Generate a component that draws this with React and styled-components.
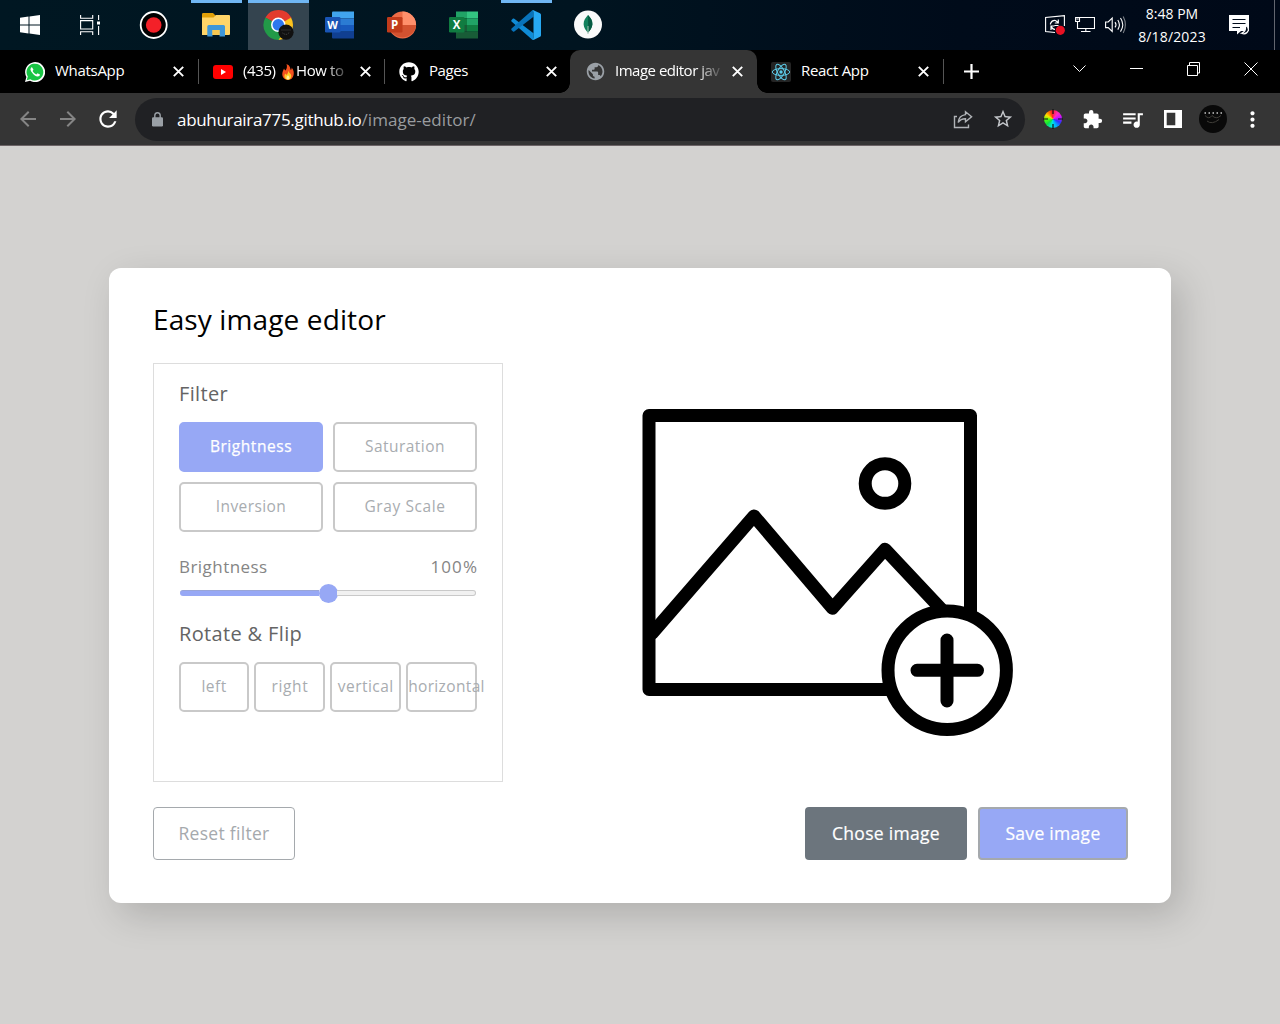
import React from "react";
import styled, { createGlobalStyle } from "styled-components";
import { FaGithub } from "react-icons/fa";
import {
  MdArrowBack,
  MdArrowForward,
  MdRefresh,
  MdStarBorder,
  MdExtension,
  MdQueueMusic,
  MdMoreVert,
  MdPublic,
} from "react-icons/md";

const Global = createGlobalStyle`
  * { box-sizing: border-box; }
  body { margin: 0; background: #d3d2d0; font-family: "Open Sans", "Noto Sans", sans-serif; overflow: hidden; }
  svg { display: block; flex: none; }
  button { font-family: inherit; margin: 0; padding: 0; }
`;

const Screen = styled.div`
  width: 1280px;
  height: 1024px;
  display: flex;
  flex-direction: column;
`;

/* ---------- taskbar ---------- */
const Taskbar = styled.header`
  height: 50px;
  display: flex;
  background: linear-gradient(90deg, #001722 0%, #001420 45%, #000b1a 75%, #000918 100%);
  color: #fff;
`;
const Slot = styled.div`
  width: ${(p) => p.$w || 62}px;
  height: 50px;
  display: flex;
  align-items: center;
  justify-content: center;
`;
const AppSlot = styled(Slot)`
  padding: 0 ${(p) => (p.$active ? "0 0 1px" : 0)};
  background: ${(p) => (p.$active ? "#34444f" : "transparent")};
  background-clip: content-box;
  background-image: ${(p) => (p.$open ? "linear-gradient(#70b6f3, #70b6f3)" : "none")};
  background-size: ${(p) => (p.$active ? 61 : 51)}px 3px;
  background-position: ${(p) => (p.$active ? 1 : 6)}px 0;
  background-repeat: no-repeat;
`;
const Tray = styled.div`
  margin-left: auto;
  display: flex;
  align-items: center;
  height: 50px;
`;
const TrayIcons = styled.div`
  display: flex;
  gap: 10px;
  margin-right: 11px;
`;
const Clock = styled.div`
  width: 70px;
  display: flex;
  flex-direction: column;
  text-align: center;
  font-size: 14px;
  line-height: 23px;
  white-space: nowrap;
`;
const ClockLine = styled.span`
  letter-spacing: ${(p) => p.$ls}px;
`;
const Notice = styled.div`
  margin: 0 24px 0 22px;
`;
const DesktopEdge = styled.div`
  width: 6px;
  height: 50px;
  border-left: 1px solid #62666f;
`;

/* ---------- tab strip ---------- */
const TabStrip = styled.nav`
  height: 43px;
  display: flex;
  align-items: stretch;
  background: #000;
  padding-left: 12px;
  color: #fff;
`;
const Tab = styled.div`
  position: relative;
  width: ${(p) => p.$w || 186}px;
  display: flex;
  align-items: center;
  padding-left: ${(p) => p.$pl ?? 15}px;
  background: ${(p) => (p.$active ? "#353535" : "transparent")};
  border-radius: 10px 10px 0 0;
  &::before,
  &::after {
    content: "";
    display: ${(p) => (p.$active ? "block" : "none")};
    position: absolute;
    bottom: 0;
    width: 10px;
    height: 10px;
  }
  &::before {
    left: -10px;
    background: radial-gradient(circle at 0 0, transparent 9.5px, #353535 10px);
  }
  &::after {
    right: -10px;
    background: radial-gradient(circle at 100% 0, transparent 9.5px, #353535 10px);
  }
`;
const TabTitle = styled.span`
  display: flex;
  align-items: center;
  width: 107px;
  margin-left: ${(p) => p.$ml ?? 9}px;
  padding-bottom: 3px;
  overflow: hidden;
  white-space: nowrap;
  font-size: 15px;
  line-height: 22px;
  letter-spacing: ${(p) => p.$ls || 0}px;
  ${(p) => p.$fade && "mask-image: linear-gradient(90deg, #000 76%, transparent 102%);"}
`;
const FlameGap = styled.span`
  padding: 3px 2px 0 3px;
`;
const CloseX = styled.svg`
  margin-left: ${(p) => p.$ml ?? 10}px;
`;
const Divider = styled.i`
  width: 1px;
  height: 25px;
  margin-left: auto;
  background: #555;
`;
const NewTab = styled.div`
  display: flex;
  align-items: center;
  margin-left: 20px;
`;
const WindowControls = styled.div`
  margin-left: auto;
  display: flex;
  align-items: center;
  gap: 43px;
  padding: 0 22px 5px 0;
`;

/* ---------- toolbar ---------- */
const Toolbar = styled.div`
  height: 53px;
  display: flex;
  align-items: center;
  background: #353535;
  border-bottom: 1px solid #6c6466;
  color: #fff;
`;
const NavIcons = styled.div`
  width: 135px;
  display: flex;
  padding-left: 7.5px;
`;
const IconCell = styled.span`
  width: 40px;
  height: 40px;
  display: flex;
  align-items: center;
  justify-content: center;
  color: ${(p) => p.$c || "#fff"};
`;
const Omnibox = styled.div`
  width: 890px;
  height: 43px;
  border-radius: 22px;
  background: #202124;
  display: flex;
  align-items: center;
  padding-left: 17px;
  padding-right: 2px;
`;
const Url = styled.span`
  margin-left: 14px;
  font-size: 17px;
  letter-spacing: -0.31px;
  color: #fff;
  white-space: nowrap;
  flex: 1;
`;
const UrlPath = styled.span`
  color: #999c9f;
  letter-spacing: 0.04px;
`;
const Extensions = styled.div`
  display: flex;
  padding-left: 7.5px;
`;
const Wheel = styled.i`
  width: 18px;
  height: 18px;
  border-radius: 50%;
  background: conic-gradient(from -10deg, #ff2020, #ff2bc0 50deg, #d010ff 85deg, #3030ff 125deg, #00b0ff 165deg, #00e8e0 200deg, #10e040 240deg, #50ff10 275deg, #ffe000 310deg, #ff8000 335deg, #ff2020);
  display: flex;
  align-items: center;
  justify-content: center;
`;

/* ---------- page ---------- */
const Page = styled.main`
  flex: 1;
  display: flex;
  justify-content: center;
  align-items: flex-start;
  padding-top: 122px;
  background: #d3d2d0;
`;
const Card = styled.section`
  width: 1062px;
  height: 635px;
  padding: 32px 43px 43px 44px;
  border-radius: 12px;
  background: #fff;
  box-shadow: 10px 12px 36px rgba(0, 0, 0, 0.17);
  display: flex;
  flex-direction: column;
`;
const Title = styled.h1`
  margin: 0;
  height: 63px;
  font-size: 28px;
  font-weight: 400;
  line-height: 38px;
  letter-spacing: 0.12px;
  color: #000;
`;
const Workspace = styled.div`
  display: flex;
  height: 419px;
`;
const Panel = styled.div`
  width: 350px;
  border: 1px solid #dddddd;
  padding: 15px 25px;
`;
const Heading = styled.h2`
  margin: 0 0 13px;
  font-size: 20px;
  font-weight: 400;
  line-height: 30px;
  letter-spacing: 0.35px;
  color: #646464;
`;
const FilterGrid = styled.div`
  display: grid;
  grid-template-columns: 1fr 1fr;
  gap: 10px;
`;
const FlipGrid = styled.div`
  display: grid;
  grid-template-columns: repeat(4, minmax(0, 1fr));
  gap: 5px;
  margin-left: -0.4px;
`;
const Option = styled.button`
  height: 50px;
  padding-bottom: 2px;
  border: 2px solid ${(p) => (p.$active ? "#97a8f5" : "#c9c9c9")};
  border-radius: 5px;
  background: ${(p) => (p.$active ? "#97a8f5" : "#fff")};
  color: ${(p) => (p.$active ? "#fff" : "#a8acb0")};
  font-size: 15.5px;
  letter-spacing: ${(p) => p.$ls ?? 0.45}px;
  -webkit-text-stroke: ${(p) => (p.$active ? "0.25px #fff" : "0")};
  white-space: nowrap;
`;
const SliderInfo = styled.div`
  display: flex;
  justify-content: space-between;
  margin-top: 23px;
  font-size: 17px;
  line-height: 24px;
  color: #858585;
`;
const Label = styled.span`
  letter-spacing: ${(p) => p.$ls || 0}px;
  margin-right: ${(p) => -(p.$ls || 0)}px;
`;
const Slider = styled.div`
  height: 20px;
  margin: 4px 1px 16px;
  display: flex;
  align-items: center;
`;
const Filled = styled.i`
  width: 139px;
  height: 6px;
  border-radius: 3px 0 0 3px;
  background: #97a8f5;
  border-top: 1px solid #99a5d8;
`;
const Thumb = styled.i`
  width: 19px;
  height: 19px;
  margin-left: -0.5px;
  border-radius: 50%;
  background: #97a8f5;
`;
const Rest = styled.i`
  flex: 1;
  height: 6px;
  margin-left: -1px;
  border: 1px solid #c9c9c9;
  border-left: 0;
  border-radius: 0 3px 3px 0;
  background: #f1f1f1;
`;
const Preview = styled.div`
  flex: 1;
  display: flex;
  align-items: flex-start;
  padding: 43px 0 0 137px;
`;
const Footer = styled.div`
  display: flex;
  margin-top: 25px;
`;
const Action = styled.button`
  width: ${(p) => p.$w}px;
  height: 53px;
  padding-bottom: 2px;
  margin-left: ${(p) => p.$ml || 0};
  border: ${(p) => p.$border};
  border-radius: 4px;
  background: ${(p) => p.$bg};
  color: ${(p) => p.$c};
  font-size: 17.5px;
  letter-spacing: 0.3px;
  -webkit-text-stroke: ${(p) => (p.$strong ? "0.2px #fff" : "0")};
  white-space: nowrap;
`;

/* ---------- drawings ---------- */
const WindowsLogo = () => (
  <svg width="20" height="20" viewBox="0 0 20 20" fill="#fff">
    <path d="M0 2.8 8.5 1.6V9.4H0ZM9.5 1.4 20 0V9.4H9.5ZM0 10.5H8.5V18.4L0 17.2ZM9.5 10.5H20V20L9.5 18.6Z" />
  </svg>
);
const TaskView = () => (
  <svg width="21" height="20" viewBox="0 0 21 20" fill="none" stroke="#fff" strokeWidth="1.1">
    <path d="M.6 0V3.2H12.7V0M.6 20V16.8H12.7V20M.6 5.6H12.7V14H.6ZM18.6 0V5M18.6 11V20" />
    <path d="M17 6.5h3v3h-3Z" fill="#fff" stroke="none" />
  </svg>
);
const Recorder = () => (
  <svg width="30" height="30" viewBox="0 0 30 30">
    <circle cx="15.7" cy="15" r="13" fill="#000" stroke="#fff" strokeWidth="1.8" />
    <circle cx="15.7" cy="15" r="7.8" fill="#f32028" />
  </svg>
);
const Folder = () => (
  <svg width="28" height="24" viewBox="0 0 28 24">
    <path d="M0 1.2Q0 0 1.2 0H11L13.5 2.5V6H0Z" fill="#e0a008" />
    <path d="M0 4.5H11.5L14 2H27Q28 2 28 3V21Q28 22 27 22H0Z" fill="#ffd568" />
    <path d="M5.3 23.5V13.5Q5.3 12 6.8 12H21.5Q23 12 23 13.5V23.5H17.5V17H10.5V23.5Z" fill="#3e97d9" />
    <path d="M10.5 17H17.5V22H10.5Z" fill="#f8c850" />
  </svg>
);
const Chrome = () => (
  <svg width="32" height="32" viewBox="0 0 32 32">
    <path d="M15.5 16 2.4 8.6A15 15 0 0 1 28.6 9Z" fill="#e33b2e" />
    <path d="M15.5 16 28 8.5A15 15 0 0 1 15.5 31L14 25Z" fill="#fcc31e" />
    <path d="M15.5 16 2.5 8.5A15 15 0 0 0 15.5 31L20 24Z" fill="#229a48" />
    <path d="M8.4 9.2H28.8L24 9.6H15Z" fill="#e33b2e" />
    <circle cx="15.3" cy="15.8" r="7.3" fill="#fff" />
    <circle cx="15.3" cy="15.8" r="5.8" fill="#2e77ee" />
    <circle cx="23" cy="23.2" r="7.6" fill="#111" />
    <path d="M18.5 21h9M19.5 24c3 2 5 2 7-1" stroke="#5a5a5a" strokeWidth=".8" fill="none" strokeDasharray="1 1" />
  </svg>
);
const letterProps = { fill: "#fff", fontFamily: "Open Sans, sans-serif", fontWeight: 700, textAnchor: "middle" };
const Word = () => (
  <svg width="30" height="28" viewBox="0 0 30 28">
    <path d="M7 1.5Q7 .5 8 .5H29V7.3H7Z" fill="#41a5ee" />
    <path d="M7 7.3H29V14H7Z" fill="#2b7cd3" />
    <path d="M7 14H29V20.7H7Z" fill="#185abd" />
    <path d="M7 20.7H29V27.5H8Q7 27.5 7 26.5Z" fill="#103f91" />
    <rect x="0" y="6" width="15.5" height="15.5" rx="1.3" fill="#1955b5" />
    <text x="7.6" y="17.7" fontSize="11" {...letterProps}>W</text>
  </svg>
);
const PowerPoint = () => (
  <svg width="30" height="28" viewBox="0 0 30 28">
    <circle cx="15.5" cy="14" r="13.6" fill="#ed6c47" />
    <path d="M15.5.4A13.6 13.6 0 0 1 29.1 14H15.5Z" fill="#ff8f6b" />
    <path d="M2 14H29.1A13.6 13.6 0 0 1 2 14Z" fill="#d35230" />
    <rect x="0" y="6" width="15.5" height="15.5" rx="1.3" fill="#c13b1b" />
    <text x="7.6" y="17.9" fontSize="11.5" {...letterProps}>P</text>
  </svg>
);
const Excel = () => (
  <svg width="30" height="28" viewBox="0 0 30 28">
    <path d="M7 .5H18V7.3H7Z" fill="#21a366" />
    <path d="M18 .5H29V7.3H18Z" fill="#33c481" />
    <path d="M7 7.3H18V14H7Z" fill="#107c41" />
    <path d="M18 7.3H29V14H18Z" fill="#21a366" />
    <path d="M7 14H18V20.7H7Z" fill="#185c37" />
    <path d="M18 14H29V20.7H18Z" fill="#107c41" />
    <path d="M7 20.7H29V27.5H7Z" fill="#185c37" />
    <rect x="0" y="6" width="15.5" height="15.5" rx="1.3" fill="#107c41" />
    <text x="7.6" y="17.9" fontSize="11.5" {...letterProps}>X</text>
  </svg>
);
const VSCode = () => (
  <svg width="30" height="30" viewBox="0 0 30 30">
    <path d="M.4 10.2 2 8.6Q2.7 8.2 3.3 8.7L22.5 23.2V29.7L21 29.5.5 11.5Q0 10.8.4 10.2Z" fill="#0f8bd6" />
    <path d="M.4 20 2 21.5Q2.7 21.9 3.3 21.4L22.5 6.8V.3L21 .6.5 18.6Q0 19.3.4 20Z" fill="#0873ba" />
    <path d="M21 .6Q22 0 23 .4L29 3.2Q30 3.8 30 4.8V25.2Q30 26.3 29 26.8L23 29.7Q22 30 21 29.4 22.5 29.3 22.5 27.8V2.2Q22.5.8 21 .6Z" fill="#27a9f3" />
  </svg>
);
const Mongo = () => (
  <svg width="30" height="30" viewBox="0 0 30 30">
    <circle cx="15" cy="14.6" r="14" fill="#fafafa" />
    <path d="M15 5C17.8 8 19.5 10.3 19.4 14.2C19.2 18 17 20.3 15.3 22.5H14.7C13 20.3 10.7 18 10.6 14.2C10.6 10.3 12.4 8 15 5Z" fill="#12805c" />
    <path d="M15 5C17.8 8 19.5 10.3 19.4 14.2C19.2 18 17 20.3 15.3 22.5Z" fill="#075b43" />
    <path d="M15 16V24" stroke="#a9c3b5" strokeWidth="1" />
  </svg>
);
const SyncTray = () => (
  <svg width="20" height="20" viewBox="0 0 20 20" fill="none" stroke="#fff" strokeWidth="1.1">
    <path d="M10 17.5 .6 16.5V2.5L19.4.6V11" />
    <path d="M5.5 9.5V8.5Q7 5 10.5 5.5L13 7.5M13.3 4.5V8H9.8M13.5 10.5H9.5M6 15V11H9.5M6.3 11.5Q7.5 14.5 10 14.3" strokeWidth="1.2" />
    <circle cx="15.3" cy="15.3" r="4.6" fill="#e81123" stroke="none" />
  </svg>
);
const NetworkTray = () => (
  <svg width="20" height="20" viewBox="0 0 20 20" fill="none" stroke="#fff" strokeWidth="1.1">
    <path d="M5 2.5H19.5V13.5H2.5V7M10.8 13.5V16.5M6 16.5H15.5M.6 2.5H4.5V6.5H.6ZM1.5 4H3.6" />
  </svg>
);
const SoundTray = () => (
  <svg width="21" height="20" viewBox="0 0 21 20" fill="none" stroke="#fff" strokeWidth="1.1">
    <path d="M.6 7H3.2L7.2 3V16.5L3.2 12.6H.6Z" />
    <path d="M10 7.2Q12 9.8 10 12.4M12.8 5Q16 9.8 12.8 14.6M15.5 3Q20 9.8 15.5 16.6" />
    <path d="M18.2 1.5Q22.6 9.8 18.2 18" stroke="#7b8087" />
  </svg>
);
const NoticeTray = () => (
  <svg width="21" height="20" viewBox="0 0 21 20">
    <path d="M0 0H20V16H12L8 19.5V16H0Z" fill="#fff" />
    <path d="M3.5 4.5H16.5M3.5 8.5H16.5M3.5 12.5H11" stroke="#000b1a" strokeWidth="1.2" />
    <path d="M16.3 10.5Q19.8 11.5 19.3 15.5Q17.5 20 12.5 18.3Q17.5 16.5 16.3 10.5Z" fill="#000b1a" stroke="#fff" strokeWidth="1.2" />
  </svg>
);
const WhatsAppIcon = () => (
  <svg width="20" height="20" viewBox="0 0 20 20">
    <path d="M0 20 1.4 15A10 10 0 1 1 5 18.7Z" fill="#fff" />
    <path d="M1.7 18.2 2.8 14.6A8.4 8.4 0 1 1 5.4 17.2Z" fill="#18c544" />
    <path d="M7 5.2Q6.5 5 6 5.7Q4.7 7.4 6.2 9.6Q9.5 14.5 12.7 14.6Q15 14.2 15 12.4L12.5 11.2L11.3 12.5Q8.8 11.5 7.6 9L8.5 7.8Z" fill="#fff" />
  </svg>
);
const YouTubeIcon = () => (
  <svg width="20" height="14" viewBox="0 0 20 14">
    <rect width="20" height="14" rx="3" fill="#f00" />
    <path d="M8 4V10L13 7Z" fill="#fff" />
  </svg>
);
const Flame = () => (
  <svg width="12" height="16" viewBox="0 0 12 16">
    <path d="M4.5 0C8.5 1.5 8 4.5 8.8 6Q10 5 9.6 3.5C12 6 12 9 11.6 11Q10.5 15.8 6 16Q1 15.5.3 11C0 8 1.5 6 2 4.5Q2.6 6 3.5 6.5C5 4.5 5.3 2.5 4.5 0Z" fill="#f4511e" />
    <path d="M6.3 6.5C6.5 9 9.5 9.5 9.3 12.2Q8.8 15.6 6 15.8Q2.7 15.5 2.4 12.5Q2.4 10.8 3.4 9.6Q4 11 4.8 10.8Q6.3 9 6.3 6.5Z" fill="#ffca28" />
    <path d="M6 11.3Q8 13 7.4 14.7Q6 16.2 4.6 14.8Q4 13 6 11.3Z" fill="#fff59d" />
  </svg>
);
const ReactIcon = () => (
  <svg width="20" height="20" viewBox="0 0 20 20" fill="none" stroke="#5ccbe8" strokeWidth="1">
    <rect width="20" height="20" rx="2" fill="#242424" stroke="none" />
    {[0, 60, 120].map((a) => (
      <ellipse key={a} cx="10" cy="10" rx="8.7" ry="3.4" transform={`rotate(${a} 10 10)`} />
    ))}
    <circle cx="10" cy="10" r="1.7" fill="#5ccbe8" stroke="none" />
  </svg>
);
const Close = ({ ml }) => (
  <CloseX $ml={ml} width="11" height="11" viewBox="0 0 11 11" stroke="#fff" strokeWidth="1.9">
    <path d="M.8.8 10.2 10.2M10.2.8.8 10.2" />
  </CloseX>
);
const Lock = () => (
  <svg width="11" height="15" viewBox="0 0 11 15">
    <path d="M2.8 6V3.6A2.7 2.9 0 0 1 8.2 3.6V6" fill="none" stroke="#9aa0a6" strokeWidth="1.4" />
    <rect y="5.2" width="11" height="9.3" rx="1.2" fill="#9aa0a6" />
  </svg>
);
const ShareIcon = () => (
  <svg width="20" height="20" viewBox="0 0 20 20" fill="none" stroke="#b0b3b7" strokeWidth="1.4">
    <path d="M4 7.5H1.5V18.5H15.5V15.5" />
    <path d="M12.5 2.7 18.6 7.7 12.5 12.8V9.8Q7.5 9.8 5.2 13.5Q5.8 6.5 12.5 5.6Z" />
  </svg>
);
const SidePanel = () => (
  <svg width="18" height="18" viewBox="0 0 18 18">
    <path d="M0 0H18V18H0ZM2.7 2.7V15.3H11.3V2.7Z" fill="#fff" fillRule="evenodd" />
  </svg>
);
const Avatar = () => (
  <svg width="28" height="28" viewBox="0 0 28 28">
    <circle cx="14" cy="14" r="14" fill="#090909" />
    <path d="M5.5 8H23" stroke="#c8c8c8" strokeWidth="1.5" strokeDasharray="1.5 2.5" />
    <path d="M6 10.5Q10 15 13 10.5Q17 15 22 10.5M8 16Q13 20 20 14.5" stroke="#3f3d38" fill="none" strokeWidth="1" />
  </svg>
);
const Picture = () => (
  <svg width="376" height="333" viewBox="640 406 376 333" fill="none" stroke="#000" strokeWidth="13" strokeLinejoin="round" strokeLinecap="round">
    <path d="M649 415.5H970.5V689.5H649Z" />
    <path d="M652 633.5 754 516 832.5 608.3 885 549.3 943 611" />
    <circle cx="885" cy="483.5" r="19.8" />
    <circle cx="947.2" cy="670.3" r="59.2" fill="#fff" />
    <path d="M917 670.3H977.5M947 640V701" />
  </svg>
);

export default function App() {
  return (
    <Screen>
      <Global />
      <Taskbar>
        <Slot $w={60}><WindowsLogo /></Slot>
        <Slot $w={61}><TaskView /></Slot>
        <Slot $w={64}><Recorder /></Slot>
        <AppSlot $open><Folder /></AppSlot>
        <AppSlot $open $active><Chrome /></AppSlot>
        <AppSlot><Word /></AppSlot>
        <AppSlot><PowerPoint /></AppSlot>
        <AppSlot><Excel /></AppSlot>
        <AppSlot $open><VSCode /></AppSlot>
        <AppSlot><Mongo /></AppSlot>
        <Tray>
          <TrayIcons><SyncTray /><NetworkTray /><SoundTray /></TrayIcons>
          <Clock>
            <ClockLine $ls={0}>8:48 PM</ClockLine>
            <ClockLine $ls={0.15}>8/18/2023</ClockLine>
          </Clock>
          <Notice><NoticeTray /></Notice>
          <DesktopEdge />
        </Tray>
      </Taskbar>

      <TabStrip>
        <Tab $w={187} $pl={13}>
          <WhatsAppIcon />
          <TabTitle $ml={10} $ls={-0.3}>WhatsApp</TabTitle>
          <Close ml={11} />
          <Divider />
        </Tab>
        <Tab $pl={14}>
          <YouTubeIcon />
          <TabTitle $ml={10} $ls={-0.4} $fade>(435)&nbsp;<FlameGap><Flame /></FlameGap>How to</TabTitle>
          <Close />
          <Divider />
        </Tab>
        <Tab $w={185} $pl={14}>
          <FaGithub size={20} />
          <TabTitle $ml={10} $ls={-0.4}>Pages</TabTitle>
          <Close />
        </Tab>
        <Tab $w={187} $active>
          <MdPublic size={21} color="#9aa0a6" />
          <TabTitle $ls={-0.5} $fade>Image editor jav</TabTitle>
          <Close ml={10} />
        </Tab>
        <Tab $w={187} $pl={14}>
          <ReactIcon />
          <TabTitle $ml={10} $ls={-0.3}>React App</TabTitle>
          <Close />
          <Divider />
        </Tab>
        <NewTab>
          <svg width="15" height="15" viewBox="0 0 15 15" stroke="#fff" strokeWidth="2.2">
            <path d="M7.5 0V15M0 7.5H15" />
          </svg>
        </NewTab>
        <WindowControls>
          <svg width="14" height="14" viewBox="0 0 14 14" fill="none" stroke="#fff"><path d="M.5 3.5 6.5 9.5 12.5 3.5" /></svg>
          <svg width="14" height="14" viewBox="0 0 14 14" stroke="#fff"><path d="M0 6.5H13" /></svg>
          <svg width="14" height="14" viewBox="0 0 14 14" fill="none" stroke="#fff"><path d="M.5 3.5H10.5V13.5H.5ZM2.5 3.5V.5H12.5V11H10.5" /></svg>
          <svg width="14" height="14" viewBox="0 0 14 14" stroke="#fff"><path d="M.5.5 13.5 13.5M13.5.5.5 13.5" /></svg>
        </WindowControls>
      </TabStrip>

      <Toolbar>
        <NavIcons>
          <IconCell $c="#858585"><MdArrowBack size={24} /></IconCell>
          <IconCell $c="#858585"><MdArrowForward size={24} /></IconCell>
          <IconCell><MdRefresh size={26} /></IconCell>
        </NavIcons>
        <Omnibox>
          <Lock />
          <Url>
            abuhuraira775.github.io<UrlPath>/image-editor/</UrlPath>
          </Url>
          <IconCell><ShareIcon /></IconCell>
          <IconCell $c="#c4c7cb"><MdStarBorder size={22} /></IconCell>
        </Omnibox>
        <Extensions>
          <IconCell>
            <Wheel>
              <svg width="20" height="20" viewBox="0 0 20 20" stroke="#111" strokeWidth="1.2"><path d="M10 0V5M10 15V20M0 10H5M15 10H20" /></svg>
            </Wheel>
          </IconCell>
          <IconCell><MdExtension size={21} /></IconCell>
          <IconCell><MdQueueMusic size={25} /></IconCell>
          <IconCell><SidePanel /></IconCell>
          <IconCell><Avatar /></IconCell>
          <IconCell><MdMoreVert size={25} /></IconCell>
        </Extensions>
      </Toolbar>

      <Page>
        <Card>
          <Title>Easy image editor</Title>
          <Workspace>
            <Panel>
              <Heading>Filter</Heading>
              <FilterGrid>
                <Option $active $ls={0.55}>Brightness</Option>
                <Option>Saturation</Option>
                <Option $ls={0.4}>Inversion</Option>
                <Option $ls={0.6}>Gray Scale</Option>
              </FilterGrid>
              <SliderInfo>
                <Label $ls={0.45}>Brightness</Label>
                <Label $ls={1.1}>100%</Label>
              </SliderInfo>
              <Slider>
                <Filled />
                <Thumb />
                <Rest />
              </Slider>
              <Heading>Rotate &amp; Flip</Heading>
              <FlipGrid>
                <Option>left</Option>
                <Option $ls={0.65}>right</Option>
                <Option>vertical</Option>
                <Option $ls={0.35}>horizontal</Option>
              </FlipGrid>
            </Panel>
            <Preview><Picture /></Preview>
          </Workspace>
          <Footer>
            <Action $w={142} $bg="#fff" $c="#a5a9ad" $border="1px solid #a5a9ad">Reset filter</Action>
            <Action $w={162} $ml="auto" $bg="#6c757d" $c="#fff" $strong $border="0">Chose image</Action>
            <Action $w={150} $ml="11px" $bg="#97a8f5" $c="#fff" $strong $border="2px solid #a5a9ad">Save image</Action>
          </Footer>
        </Card>
      </Page>
    </Screen>
  );
}
